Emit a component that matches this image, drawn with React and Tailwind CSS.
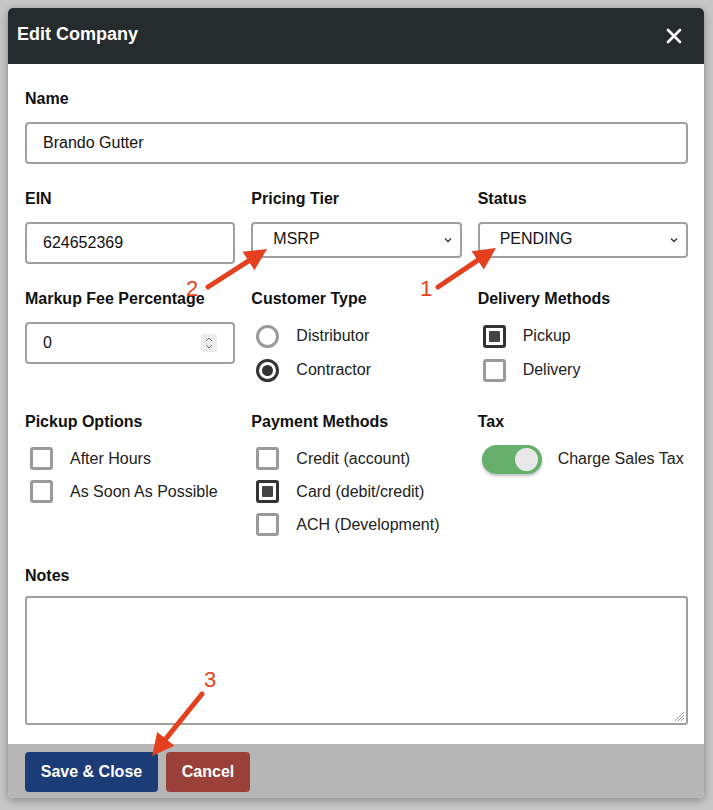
import React from "react";

const font = { fontFamily: '"Liberation Sans", Arial, sans-serif' };

function Label({ children }) {
  return <div className="text-[16px] font-bold leading-[18px] text-[#111] mb-[14px]">{children}</div>;
}

function Check({ checked, label, h = "h-[33px]" }) {
  return (
    <div className={"flex items-center " + h}>
      <div
        className={
          "ml-[5px] w-[23px] h-[23px] rounded-[3px] border-[3px] flex items-center justify-center " +
          (checked ? "border-[#333]" : "border-[#9a9a9a]")
        }
      >
        {checked && <div className="w-[11px] h-[11px] bg-[#444] rounded-[1px]" />}
      </div>
      <span className="ml-[17px] text-[16px] text-[#222]">{label}</span>
    </div>
  );
}

function Radio({ checked, label }) {
  return (
    <div className="flex items-center h-[34px]">
      <div
        className={
          "ml-[5px] w-[23px] h-[23px] rounded-full border-[3px] flex items-center justify-center " +
          (checked ? "border-[#333]" : "border-[#9a9a9a]")
        }
      >
        {checked && <div className="w-[11px] h-[11px] bg-[#333] rounded-full" />}
      </div>
      <span className="ml-[17px] text-[16px] text-[#222]">{label}</span>
    </div>
  );
}

function Select({ value }) {
  return (
    <div className="h-[36px] border-2 border-[#a0a0a0] rounded-[4px] flex items-center justify-between pl-[20px] pr-[8px] bg-white">
      <span className="text-[16px] text-[#111] -mt-[2px]">{value}</span>
      <svg width="8" height="6" viewBox="0 0 8 6">
        <path d="M1 1.5 L4 4.5 L7 1.5" fill="none" stroke="#333" strokeWidth="1.3" />
      </svg>
    </div>
  );
}

function Input({ value, spinner }) {
  return (
    <div className="h-[42px] border-2 border-[#a0a0a0] rounded-[4px] flex items-center justify-between pl-[16px] pr-[16px] bg-white">
      <span className="text-[16px] text-[#111] -mt-[1px]">{value}</span>
      {spinner && (
        <div className="w-[16px] h-[18px] bg-[#ececec] rounded-[2px] flex flex-col items-center justify-center gap-[2px]">
          <svg width="8" height="5" viewBox="0 0 8 5">
            <path d="M1 4 L4 1 L7 4" fill="none" stroke="#777" strokeWidth="1" />
          </svg>
          <svg width="8" height="5" viewBox="0 0 8 5">
            <path d="M1 1 L4 4 L7 1" fill="none" stroke="#777" strokeWidth="1" />
          </svg>
        </div>
      )}
    </div>
  );
}

function Arrow({ x1, y1, x2, y2 }) {
  const dx = x2 - x1;
  const dy = y2 - y1;
  const len = Math.sqrt(dx * dx + dy * dy);
  const ux = dx / len;
  const uy = dy / len;
  const hl = 22;
  const hw = 11;
  const bx = x2 - ux * hl;
  const by = y2 - uy * hl;
  const p1 = `${bx - uy * hw},${by + ux * hw}`;
  const p2 = `${bx + uy * hw},${by - ux * hw}`;
  return (
    <g>
      <line x1={x1} y1={y1} x2={bx + ux * 2} y2={by + uy * 2} stroke="#e5401d" strokeWidth="5" strokeLinecap="round" />
      <polygon points={`${x2},${y2} ${p1} ${p2}`} fill="#e5401d" />
    </g>
  );
}

export default function App() {
  return (
    <div className="relative w-[713px] h-[810px] bg-[#c8c8c8] overflow-hidden" style={font}>
      <div className="absolute left-[8px] top-[8px] w-[696px] h-[790px] bg-white rounded-[5px] shadow-[0_2px_10px_rgba(0,0,0,0.35)] flex flex-col overflow-hidden">
        <div className="h-[56px] bg-[#262c2d] flex items-center justify-between pl-[9px] pr-[22px]">
          <span className="text-white font-bold text-[18px] -mt-[4px]">Edit Company</span>
          <svg width="16" height="16" viewBox="0 0 16 16">
            <path d="M2 2 L14 14 M14 2 L2 14" stroke="white" strokeWidth="2.6" strokeLinecap="round" />
          </svg>
        </div>
        <div className="flex-1 pt-[26px] pl-[17px] pr-[16px]">
          <Label>Name</Label>
          <Input value="Brando Gutter" />
          <div className="grid grid-cols-3 gap-x-[16px] mt-[26px]">
            <div>
              <Label>EIN</Label>
              <Input value="624652369" />
            </div>
            <div>
              <Label>Pricing Tier</Label>
              <Select value="MSRP" />
            </div>
            <div>
              <Label>Status</Label>
              <Select value="PENDING" />
            </div>
          </div>
          <div className="grid grid-cols-3 gap-x-[16px] mt-[26px]">
            <div>
              <Label>Markup Fee Percentage</Label>
              <Input value="0" spinner />
            </div>
            <div>
              <Label>Customer Type</Label>
              <div className="-mt-[3px]">
                <Radio label="Distributor" />
                <Radio checked label="Contractor" />
              </div>
            </div>
            <div>
              <Label>Delivery Methods</Label>
              <div className="-mt-[3px]">
                <Check checked label="Pickup" h="h-[34px]" />
                <Check label="Delivery" h="h-[34px]" />
              </div>
            </div>
          </div>
          <div className="grid grid-cols-3 gap-x-[16px] mt-[26px]">
            <div>
              <Label>Pickup Options</Label>
              <div className="-mt-[3px]">
                <Check label="After Hours" />
                <Check label="As Soon As Possible" />
              </div>
            </div>
            <div>
              <Label>Payment Methods</Label>
              <div className="-mt-[3px]">
                <Check label="Credit (account)" />
                <Check checked label="Card (debit/credit)" />
                <Check label="ACH (Development)" />
              </div>
            </div>
            <div>
              <Label>Tax</Label>
              <div className="flex items-center -mt-[4px] h-[36px]">
                <div className="ml-[4px] w-[60px] h-[29px] rounded-full bg-[#67b06b] flex items-center justify-end pr-[4px] shadow-[0_2px_3px_rgba(0,0,0,0.25)]">
                  <div className="w-[23px] h-[23px] rounded-full bg-[#e8e8e8]" />
                </div>
                <span className="ml-[16px] text-[16px] text-[#222]">Charge Sales Tax</span>
              </div>
            </div>
          </div>
          <div className="mt-[26px]">
            <Label>Notes</Label>
            <div className="relative h-[129px] border-2 border-[#a0a0a0] rounded-[3px] -mt-[3px]">
              <svg className="absolute right-[1px] bottom-[1px]" width="11" height="11" viewBox="0 0 11 11">
                <path d="M10 1 L1 10 M10 4 L4 10 M10 7 L7 10" stroke="#999" strokeWidth="1" />
              </svg>
            </div>
          </div>
        </div>
        <div className="h-[54px] bg-[#b6b6b6] flex items-center pl-[17px] gap-[8px] pt-[4px] pb-[2px]">
          <div className="w-[133px] h-[40px] bg-[#1c3c78] rounded-[4px] flex items-center justify-center text-white font-bold text-[16px]">
            Save &amp; Close
          </div>
          <div className="w-[84px] h-[40px] bg-[#9b4038] rounded-[4px] flex items-center justify-center text-white font-bold text-[16px]">
            Cancel
          </div>
        </div>
      </div>
      <svg className="absolute inset-0 pointer-events-none" width="713" height="810">
        <Arrow x1={438} y1={287} x2={496} y2={248} />
        <Arrow x1={208} y1={287} x2={267} y2={249} />
        <Arrow x1={202} y1={694} x2={152} y2={756} />
        <text x="420" y="296" fill="#e5401d" fontSize="22" fontFamily="Liberation Sans, Arial, sans-serif">1</text>
        <text x="186" y="296" fill="#e5401d" fontSize="22" fontFamily="Liberation Sans, Arial, sans-serif">2</text>
        <text x="204" y="687" fill="#e5401d" fontSize="22" fontFamily="Liberation Sans, Arial, sans-serif">3</text>
      </svg>
    </div>
  );
}
